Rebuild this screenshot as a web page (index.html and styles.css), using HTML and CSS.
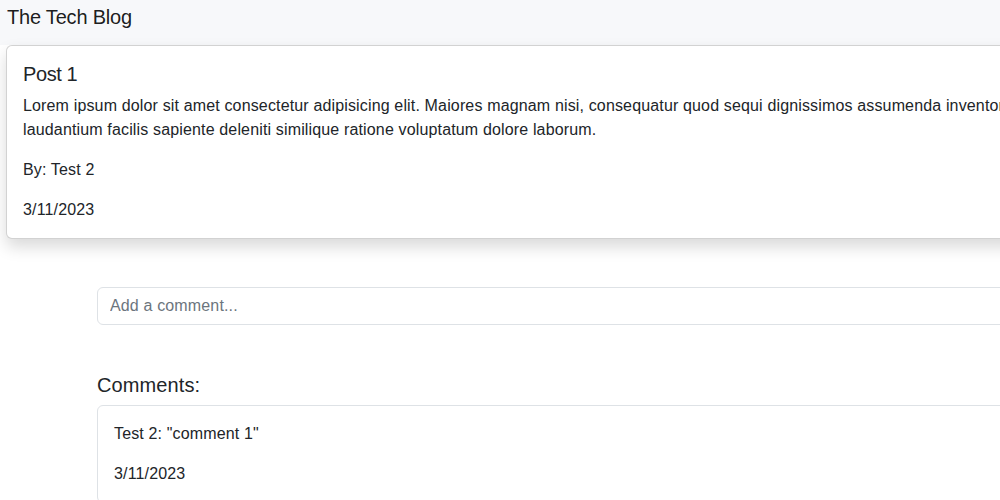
FILE: index.html
```html
<!DOCTYPE html>
<html lang="en">
<head>
<meta charset="utf-8">
<title>The Tech Blog</title>
<link rel="stylesheet" href="styles.css">
</head>
<body>
<nav class="navbar">
  <span class="brand">The Tech Blog</span>
</nav>
<main class="page">
  <article class="card post">
    <h5 class="card-title">Post 1</h5>
    <p class="card-text">Lorem ipsum dolor sit amet consectetur adipisicing elit. Maiores magnam nisi, consequatur quod sequi dignissimos assumenda inventore laudantium facilis sapiente deleniti similique ratione voluptatum dolore laborum.</p>
    <p class="card-text">By: Test 2</p>
    <p class="card-text">3/11/2023</p>
  </article>
  <section class="comments">
    <form class="comment-form">
      <input class="form-control" type="text" placeholder="Add a comment...">
    </form>
    <h5 class="comments-title">Comments:</h5>
    <div class="card comment">
      <p class="card-text">Test 2: "comment 1"</p>
      <p class="card-text">3/11/2023</p>
    </div>
  </section>
</main>
</body>
</html>
```
FILE: styles.css
```css
html, body {
  overflow: hidden;
}
body {
  margin: 0;
  font-family: "Liberation Sans", Arial, sans-serif;
  font-size: 16px;
  line-height: 24px;
  letter-spacing: 0.15px;
  color: #212529;
  background: #fff;
  width: 1060px;
}
.navbar {
  background: #f7f8fa;
  height: 45px;
  padding: 2px 7px 0;
  box-sizing: border-box;
}
.brand {
  font-size: 20px;
  line-height: 30px;
  color: rgba(0, 0, 0, 0.9);
  letter-spacing: -0.2px;
}
.page {
  padding: 0 6px;
}
.card {
  background: #fff;
  border: 1px solid rgba(0, 0, 0, 0.175);
  border-radius: 6px;
  padding: 16px;
}
.post {
  box-shadow: 0 8px 16px rgba(0, 0, 0, 0.15);
}
.card-title {
  margin: 0 0 8px;
  font-size: 20px;
  line-height: 24px;
  font-weight: 500;
  letter-spacing: -0.4px;
}
.card-text {
  margin: 0 0 16px;
  padding-top: 1px;
  margin-top: -1px;
}
.card-text:last-child {
  margin-bottom: 0;
}
.comments {
  padding-left: 91px;
  padding-top: 48px;
}
.comment-form {
  margin: 0 0 48px;
}
.form-control {
  display: block;
  width: 100%;
  box-sizing: border-box;
  height: 38px;
  padding: 6px 12px;
  font: inherit;
  letter-spacing: inherit;
  color: #212529;
  border: 1px solid #dee2e6;
  border-radius: 6px;
  background: #fff;
}
.form-control::placeholder {
  color: #6c757d;
  opacity: 1;
}
.comments-title {
  margin: 0 0 8px;
  font-size: 20px;
  line-height: 24px;
  font-weight: 500;
  letter-spacing: 0.1px;
}
.comment {
  border-color: #dee2e6;
}
```
